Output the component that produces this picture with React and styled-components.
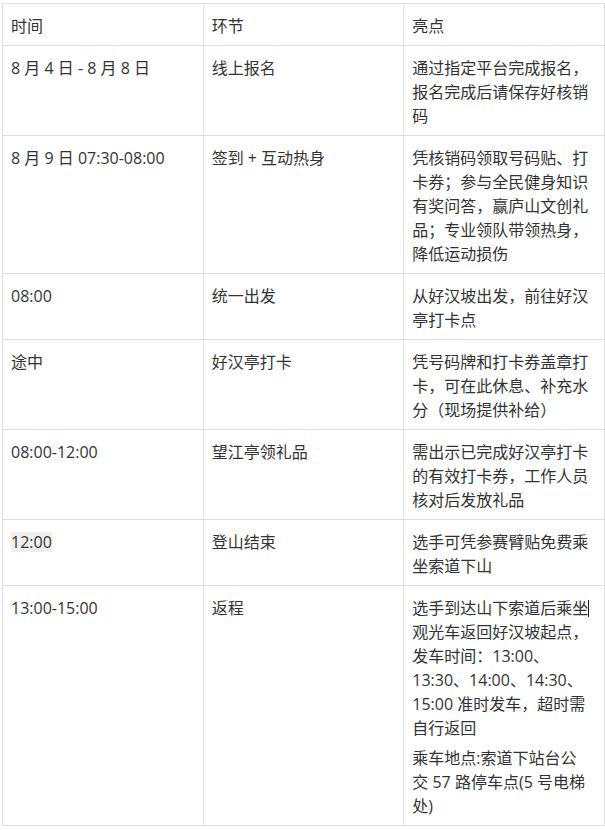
import React from 'react'
import styled, { createGlobalStyle } from 'styled-components'

const Global = createGlobalStyle`
  html, body {
    margin: 0;
    padding: 0;
    background: #fff;
  }
  body {
    font-family: 'Open Sans', 'Noto Sans CJK SC', sans-serif;
    color: #333;
  }
`

const Wrapper = styled.div`
  padding: 3px 0 0 2px;
`

const Table = styled.table`
  width: 603px;
  border-collapse: collapse;
  table-layout: fixed;
  font-size: 16px;
  line-height: 24px;
`

const Cell = styled.td`
  border: 1px solid #dedede;
  padding: 10px 13px 7px 8px;
  vertical-align: top;
`

const Para = styled.p`
  margin: 0;
  & + & {
    margin-top: 6px;
  }
`

const Mark = styled.span`
  display: inline-block;
  background: #efefef;
  line-height: 20px;
  vertical-align: baseline;
`

const Caret = styled.span`
  display: inline-block;
  width: 1px;
  height: 17px;
  background: #222;
  vertical-align: -3px;
  margin-right: -1px;
`

const rows = [
  ['时间', '环节', ['亮点']],
  ['8 月 4 日 - 8 月 8 日', '线上报名', ['通过指定平台完成报名，报名完成后请保存好核销码']],
  ['8 月 9 日 07:30-08:00', '签到 + 互动热身', ['凭核销码领取号码贴、打卡券；参与全民健身知识有奖问答，赢庐山文创礼品；专业领队带领热身，降低运动损伤']],
  ['08:00', '统一出发', ['从好汉坡出发，前往好汉亭打卡点']],
  ['途中', '好汉亭打卡', ['凭号码牌和打卡券盖章打卡，可在此休息、补充水分（现场提供补给）']],
  ['08:00-12:00', '望江亭领礼品', ['需出示已完成好汉亭打卡的有效打卡券，工作人员核对后发放礼品']],
  ['12:00', '登山结束', ['选手可凭参赛臂贴免费乘坐索道下山'], true],
]

export default function App() {
  return (
    <Wrapper>
      <Global />
      <Table>
        <tbody>
          {rows.map(([time, step, notes, marked]) => (
            <tr key={time}>
              <Cell>{marked ? <Mark>{time}</Mark> : time}</Cell>
              <Cell>{step}</Cell>
              <Cell>
                {notes.map((n) => (
                  <Para key={n}>{n}</Para>
                ))}
              </Cell>
            </tr>
          ))}
          <tr>
            <Cell>13:00-15:00</Cell>
            <Cell>返程</Cell>
            <Cell>
              <Para>
                选手到达山下索道后乘坐<Caret />观光车返回好汉坡起点，发车时间：13:00、13:30、14:00、14:30、15:00 准时发车，超时需自行返回
              </Para>
              <Para>乘车地点:索道下站台公交 57 路停车点(5 号电梯处)</Para>
            </Cell>
          </tr>
        </tbody>
      </Table>
    </Wrapper>
  )
}
